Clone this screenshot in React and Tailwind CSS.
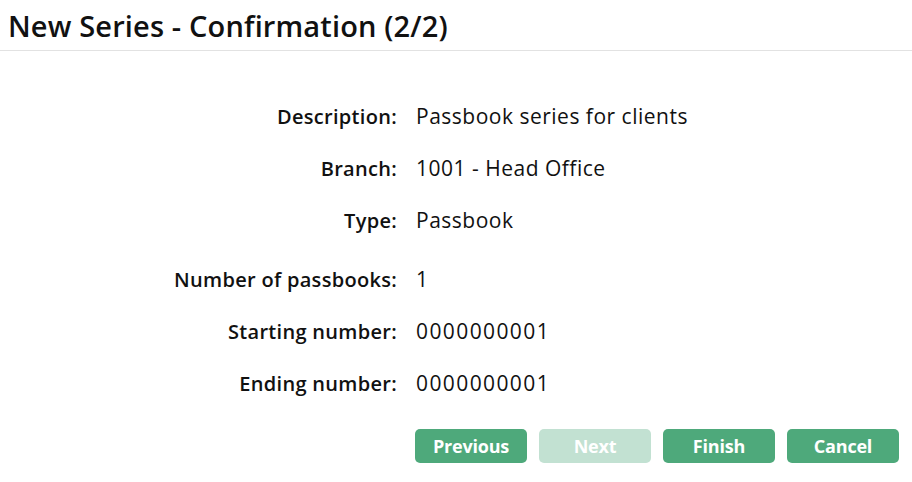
const rows = [
  { label: "Description:", value: "Passbook series for clients", h: "h-[52px]", num: false },
  { label: "Branch:", value: "1001 - Head Office", h: "h-[52px]", num: false },
  { label: "Type:", value: "Passbook", h: "h-[59px]", num: false },
  { label: "Number of passbooks:", value: "1", h: "h-[52px]", num: false },
  { label: "Starting number:", value: "0000000001", h: "h-[52px]", num: true },
  { label: "Ending number:", value: "0000000001", h: "h-[52px]", num: true },
];

export default function App() {
  return (
    <div className="w-[912px] h-[482px] bg-white text-[#111] font-['Open_Sans',sans-serif] overflow-hidden">
      <div className="h-[51px] border-b border-[#e2e2e2] px-2 flex items-center">
        <h1 className="text-[29px] font-semibold tracking-[0.15px] leading-none">New Series - Confirmation (2/2)</h1>
      </div>

      <div className="pt-[56px]">
        {rows.map((row) => (
          <div key={row.label} className={`grid grid-cols-[397px_1fr] gap-x-[19px] items-start ${row.h}`}>
            <div className="text-right text-[20px] font-semibold tracking-[0.3px] leading-none">{row.label}</div>
            <div
              className={`text-[21px] font-normal leading-none -mt-[1px] ${row.num ? "tracking-[1.4px]" : "tracking-[0.5px]"}`}
            >
              {row.value}
            </div>
          </div>
        ))}
      </div>

      <div className="flex justify-end gap-[12px] pr-[13px] mt-[3px]">
        <button className="w-[112px] h-[34px] rounded-[5px] bg-[#4ea97b] text-white text-[18px] font-bold tracking-[-0.2px]">Previous</button>
        <button disabled className="w-[112px] h-[34px] rounded-[5px] bg-[#c2e1d2] text-white text-[18px] font-bold tracking-[-0.2px]">Next</button>
        <button className="w-[112px] h-[34px] rounded-[5px] bg-[#4ea97b] text-white text-[18px] font-bold tracking-[-0.2px]">Finish</button>
        <button className="w-[112px] h-[34px] rounded-[5px] bg-[#4ea97b] text-white text-[18px] font-bold tracking-[-0.2px]">Cancel</button>
      </div>
    </div>
  );
}
